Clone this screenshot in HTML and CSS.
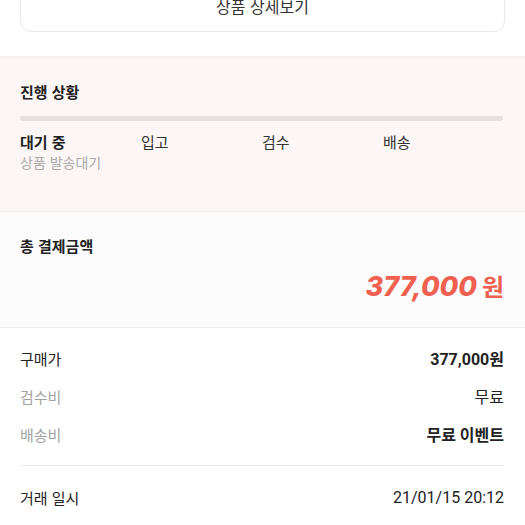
FILE: index.html
```html
<!DOCTYPE html>
<html lang="ko">
<head>
  <meta charset="UTF-8">
  <title>구매 내역</title>
  <link rel="stylesheet" href="styles.css">
</head>
<body>
  <div class="top">
    <button class="detail-btn">상품 상세보기</button>
  </div>

  <div class="progress">
    <div class="title">진행 상황</div>
    <div class="bar"></div>
    <div class="steps">
      <div class="step active">
        <div class="step-name">대기 중</div>
        <div class="step-desc">상품 발송대기</div>
      </div>
      <div class="step"><div class="step-name">입고</div></div>
      <div class="step"><div class="step-name">검수</div></div>
      <div class="step"><div class="step-name">배송</div></div>
    </div>
  </div>

  <div class="total">
    <div class="title">총 결제금액</div>
    <div class="amount">
      <span class="num">377,000</span>
      <span class="won">원</span>
    </div>
  </div>

  <div class="info">
    <div class="row">
      <span class="label">구매가</span>
      <span class="value bold">377,000원</span>
    </div>
    <div class="row">
      <span class="label gray">검수비</span>
      <span class="value">무료</span>
    </div>
    <div class="row">
      <span class="label gray">배송비</span>
      <span class="value bold">무료 이벤트</span>
    </div>
    <div class="divider"></div>
    <div class="row">
      <span class="label">거래 일시</span>
      <span class="value">21/01/15 20:12</span>
    </div>
  </div>
</body>
</html>
```

FILE: styles.css
```css
body {
  margin: 0;
  background: #ffffff;
  color: #222222;
  font-family: "Noto Sans CJK KR", "Noto Sans", sans-serif;
  font-size: 15px;
  overflow: hidden;
}

.top {
  padding: 0 20px 24px;
  border-bottom: 2px solid #f3f0f0;
}

.detail-btn {
  display: block;
  width: 100%;
  height: 52px;
  margin-top: -20px;
  background: #ffffff;
  border: 1px solid #e8e8e8;
  border-radius: 11px;
  font-family: "Noto Sans CJK KR", sans-serif;
  font-size: 16px;
  color: #333333;
}

.title {
  font-weight: 700;
  font-size: 15px;
  line-height: 20px;
}

.progress {
  background: #fcf6f6;
  padding: 24px 22px 39px 20px;
  border-bottom: 1px solid #f6ecec;
}

.bar {
  height: 5px;
  margin-top: 14px;
  background: #e6e1e1;
  border-radius: 2px;
}

.steps {
  display: grid;
  grid-template-columns: repeat(4, 121px);
  margin-top: 11px;
}

.step-name {
  line-height: 20px;
  color: #333333;
}

.step.active .step-name {
  font-weight: 700;
  color: #222222;
}

.step-desc {
  line-height: 20px;
  font-size: 14px;
  color: #aaaaaa;
}

.total {
  background: #fcfcfc;
  padding: 24px 21px 24px 20px;
  border-bottom: 1px solid #ececec;
}

.amount {
  display: flex;
  justify-content: flex-end;
  align-items: baseline;
  gap: 5px;
  margin-top: 14px;
  line-height: 32px;
  color: #ef6050;
}

.num {
  font-family: Inter, "Liberation Sans", sans-serif;
  font-style: italic;
  font-weight: 800;
  font-size: 27px;
}

.won {
  font-weight: 700;
  font-size: 24px;
}

.info {
  display: flex;
  flex-direction: column;
  gap: 18px;
  padding: 20px 21px 0 20px;
}

.row {
  display: flex;
  justify-content: space-between;
  align-items: center;
  height: 20px;
}

.row .gray {
  color: #a3a3a3;
}

.value {
  font-family: Roboto, "Noto Sans CJK KR", sans-serif;
  font-size: 16px;
  color: #222222;
}

.value.bold {
  font-weight: 700;
}

.divider {
  height: 1px;
  background: #e9e9e9;
  margin: 3px 0;
}
```
